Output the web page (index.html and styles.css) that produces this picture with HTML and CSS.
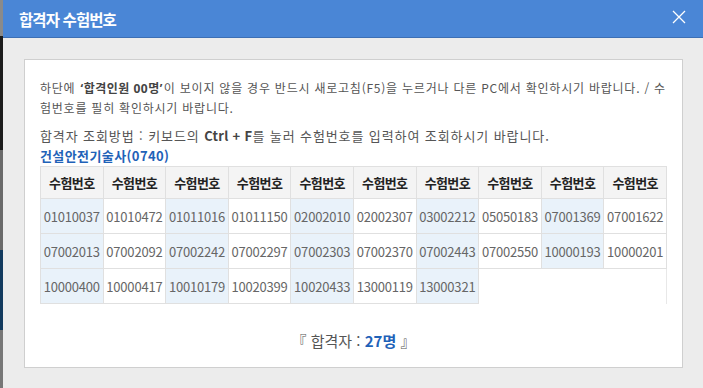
FILE: index.html
```html
<!DOCTYPE html>
<html lang="ko">
<head>
  <meta charset="UTF-8" />
  <meta name="viewport" content="width=device-width, initial-scale=1.0"/>
  <title>합격자 수험번호</title>
  <link rel="stylesheet" href="styles.css">
</head>
<body>

  <div class="backdrop"></div>

  <div class="modal">
    <div class="modal-head">
      <h1>합격자 수험번호</h1>
      <button class="close-btn" aria-label="닫기">
        <svg width="14" height="14" viewBox="0 0 14 14">
          <path d="M1 1 L13 13 M13 1 L1 13" stroke="#fff" stroke-width="1.3" fill="none"/>
        </svg>
      </button>
    </div>

    <div class="modal-body">
      <div class="result-box">
        <p class="notice">하단에 <strong>‘합격인원 00명’</strong>이 보이지 않을 경우 반드시 새로고침(F5)을 누르거나 다른 PC에서 확인하시기 바랍니다. / 수험번호를 필히 확인하시기 바랍니다.</p>
        <p class="howto">합격자 조회방법 : 키보드의 <strong>Ctrl + F</strong>를 눌러 수험번호를 입력하여 조회하시기 바랍니다.</p>
        <h2 class="exam-name">건설안전기술사(0740)</h2>

        <table class="pass-table">
          <thead>
            <tr>
              <th>수험번호</th><th>수험번호</th><th>수험번호</th><th>수험번호</th><th>수험번호</th>
              <th>수험번호</th><th>수험번호</th><th>수험번호</th><th>수험번호</th><th>수험번호</th>
            </tr>
          </thead>
          <tbody>
            <tr>
              <td>01010037</td><td>01010472</td><td>01011016</td><td>01011150</td><td>02002010</td>
              <td>02002307</td><td>03002212</td><td>05050183</td><td>07001369</td><td>07001622</td>
            </tr>
            <tr>
              <td>07002013</td><td>07002092</td><td>07002242</td><td>07002297</td><td>07002303</td>
              <td>07002370</td><td>07002443</td><td>07002550</td><td>10000193</td><td>10000201</td>
            </tr>
            <tr>
              <td>10000400</td><td>10000417</td><td>10010179</td><td>10020399</td><td>10020433</td>
              <td>13000119</td><td>13000321</td><td class="empty"></td><td class="empty"></td><td class="empty last"></td>
            </tr>
          </tbody>
        </table>

        <p class="total">『 합격자 : <strong>27명</strong> 』</p>
      </div>
    </div>
  </div>

</body>
</html>
```

FILE: styles.css
```css
/* General */
body {
  margin: 0;
  display: flex;
  height: 388px;
  overflow: hidden;
  font-family: "Noto Sans CJK KR", "Noto Sans", sans-serif;
  color: #555;
  background: #222;
}

/* Page behind the dialog */
.backdrop {
  width: 3px;
  flex-shrink: 0;
  background: linear-gradient(to bottom, #8a8a8a 0, #8a8a8a 36px, #1c1c1c 36px, #1c1c1c 150px, #6a6a6a 150px, #6a6a6a 250px, #123a5e 250px, #123a5e 330px, #777 330px);
}

/* Dialog */
.modal {
  flex: 1;
  background: #ececec;
  display: flex;
  flex-direction: column;
}

.modal-head {
  height: 37px;
  background: #4a86d6;
  border-bottom: 1px solid #3d6fb4;
  display: flex;
  align-items: center;
  justify-content: space-between;
  padding: 0 17px 0 16px;
}

.modal-head h1 {
  margin: 0;
  font-size: 15.5px;
  font-weight: bold;
  color: #fff;
  letter-spacing: -0.9px;
}

.close-btn {
  background: none;
  border: none;
  padding: 0;
  width: 14px;
  height: 14px;
  margin-bottom: 3px;
  cursor: pointer;
}

.modal-body {
  padding: 21px 20px 0 21px;
}

/* White result box */
.result-box {
  background: #fff;
  border: 1px solid #cfcfcf;
  padding: 18px 15px 16px 15px;
}

.notice {
  margin: 0;
  font-size: 12px;
  line-height: 19px;
  letter-spacing: 0.77px;
}

/* latin quotes stay narrow */
.notice strong {
  font-family: "Noto Sans", "Noto Sans CJK KR", sans-serif;
  color: #444;
  letter-spacing: 0.5px;
  margin: 0 1px;
}

.howto {
  margin: 9px 0 0;
  font-size: 13px;
  line-height: 19px;
  letter-spacing: 0.9px;
}

.howto strong {
  color: #444;
  letter-spacing: 0.3px;
}

.exam-name {
  margin: 1px 0 0;
  font-size: 13px;
  line-height: 20px;
  letter-spacing: 0.4px;
  color: #1f62b8;
  font-weight: bold;
}

/* Number table */
.pass-table {
  width: 627px;
  margin-top: 0;
  border-collapse: collapse;
  table-layout: fixed;
  font-size: 13px;
}

.pass-table th,
.pass-table td {
  border: 1px solid #e0e0e0;
  text-align: center;
  padding: 0;
  white-space: nowrap;
}

.pass-table th {
  height: 31px;
  background: #f4f4f4;
  color: #222;
  font-weight: bold;
  font-size: 13px;
  letter-spacing: -0.6px;
}

.pass-table td {
  height: 34px;
  color: #666;
  letter-spacing: -0.2px;
}

.pass-table td:nth-child(odd) {
  background: #e9f2fa;
}

.pass-table td.empty {
  background: #fff;
  border-style: none;
  border-top: 1px solid #e0e0e0;
}

.pass-table td.empty.last {
  border-right: 1px solid #e8e8e8;
}

/* Summary line */
.total {
  margin: 26px 0 0;
  text-align: center;
  font-size: 15px;
  color: #555;
}

.total strong {
  color: #1f62b8;
}
```
